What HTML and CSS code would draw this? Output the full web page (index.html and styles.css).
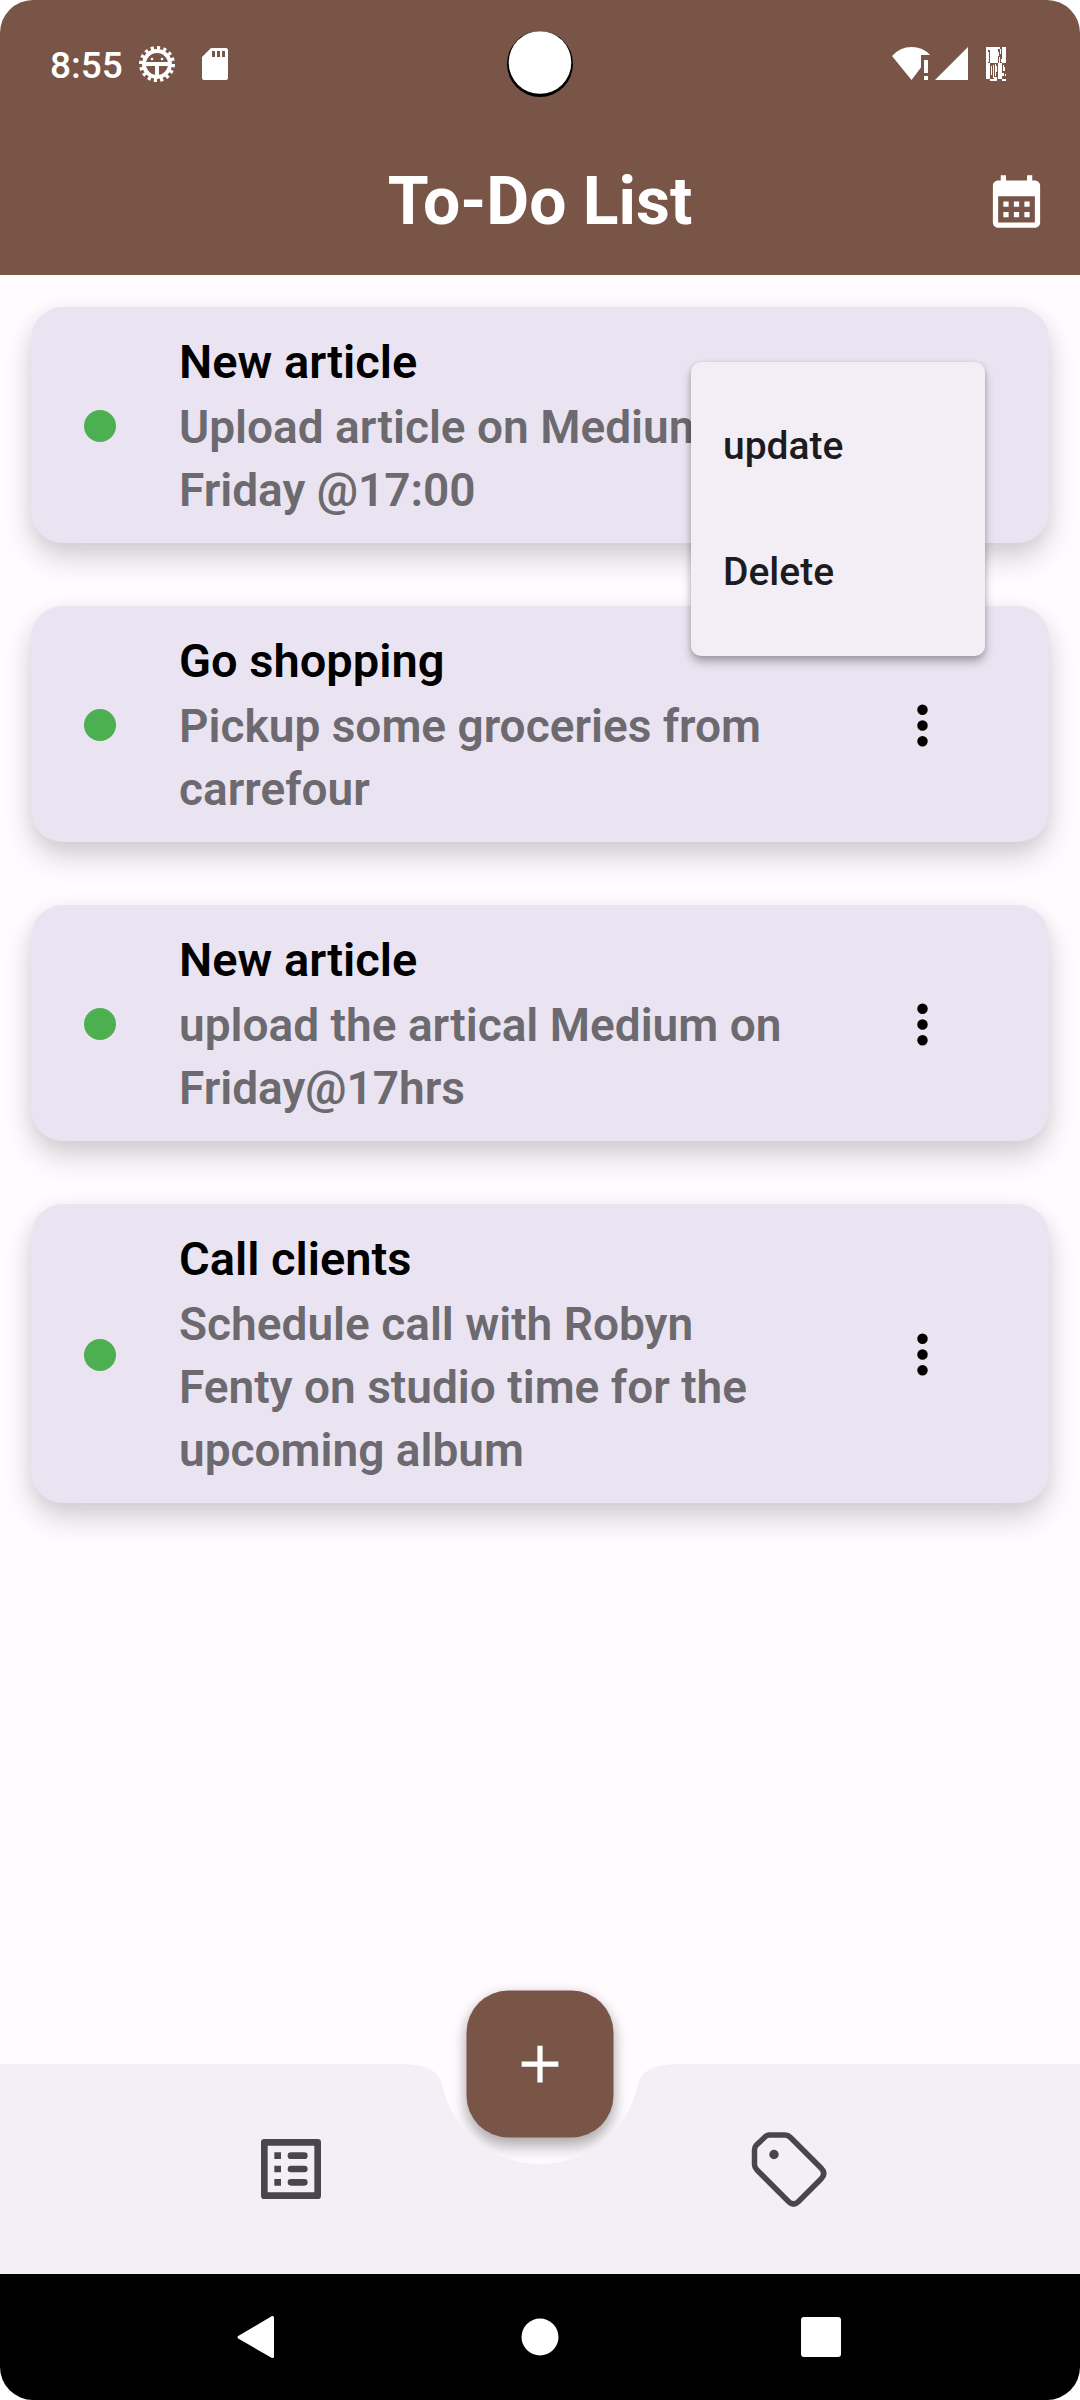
FILE: index.html
```html
<!DOCTYPE html>
<html lang="en">
<head>
  <meta charset="utf-8">
  <meta name="viewport" content="width=device-width, initial-scale=1">
  <title>To-Do List</title>
  <link rel="stylesheet" href="styles.css">
</head>
<body>
<div class="screen">
  <header class="header">
    <div class="status">
      <div class="status-group">
        <span class="clock">8:55</span>
        <svg class="gear" viewBox="0 0 36 36" aria-hidden="true">
          <circle cx="18" cy="18" r="13" fill="none" stroke="#fff" stroke-width="4"/>
          <circle cx="18" cy="18" r="16" fill="none" stroke="#fff" stroke-width="4" pathLength="32" stroke-dasharray="1 1"/>
          <path d="M6 16h24v4H6zM16 19h4v12h-4z" fill="#fff"/>
          <circle cx="13" cy="13" r="1.3" fill="#fff"/>
          <circle cx="23" cy="13" r="1.3" fill="#fff"/>
        </svg>
        <svg class="sd" viewBox="0 0 26 32" aria-hidden="true">
          <path fill="#fff" fill-rule="evenodd" d="M9 0h15a2 2 0 0 1 2 2v28a2 2 0 0 1-2 2H2a2 2 0 0 1-2-2V9zM10 3v6h3V3zm5 0v6h3V3zm5 0v6h3V3z"/>
        </svg>
      </div>
      <svg class="camera" viewBox="0 0 66 66" aria-hidden="true">
        <circle cx="33" cy="33" r="33"/>
        <circle cx="33" cy="31.500" r="31.300" fill="#fff"/>
      </svg>
      <div class="status-group status-right">
        <svg class="wifi" viewBox="0 0 40 34" aria-hidden="true">
          <path fill="#fff" d="M0 9Q8 0 19.500 0T38 8h-9v12.500L19.500 33zM32 13h4v13h-4zM32 29h4v4h-4z"/>
        </svg>
        <svg class="cell" viewBox="0 0 33 34" aria-hidden="true"><path fill="#fff" d="M33 0v33H0z"/></svg>
        <svg class="battery" viewBox="0 0 20 34" aria-hidden="true" shape-rendering="crispEdges">
          <path fill="#fff" d="M0 0h2v32H0zM2 0h2v3H2zM2 5h1v10H2zM4 2h8v14H4zM4 0h10v2H4zM12 5h1v4h-1zM13 10h1v6h-1zM14 2h1v5h-1zM16 0h4v16h-4zM15 12h1v3h-1zM2 16h2v16H2zM5 19h1v9H5zM7 18h1v13H7zM9 17h1v12H9zM10 19h1v6h-1zM12 16h4v16h-4zM17 18h1v6h-1zM18 20h1v4h-1zM16 26h2v3h-2zM19 27h1v2h-1zM4 32h7v2H4zM16 32h4v2h-4zM8 30h3v2H8z"/>
        </svg>
      </div>
    </div>
    <div class="appbar">
      <h1 class="title">To-Do List</h1>
      <button class="icon-button calendar" type="button" aria-label="Calendar">
        <svg viewBox="0 0 24 24" aria-hidden="true"><path fill="#fff" d="M19 4h-1V2h-2v2H8V2H6v2H5c-1.110 0-1.990.9-1.990 2L3 20c0 1.100.89 2 2 2h14c1.100 0 2-.9 2-2V6c0-1.100-.9-2-2-2zm0 16H5V10h14v10zM9 14H7v-2h2v2zm4 0h-2v-2h2v2zm4 0h-2v-2h2v2zm-8 4H7v-2h2v2zm4 0h-2v-2h2v2zm4 0h-2v-2h2v2z"/></svg>
      </button>
    </div>
  </header>

  <main class="tasks">
    <article class="card">
      <span class="dot"></span>
      <div class="card-text">
        <h2 class="card-title">New article</h2>
        <p class="card-desc">Upload article on Medium Friday @17:00</p>
      </div>
      <button class="icon-button more" type="button" aria-label="Options">
        <svg viewBox="0 0 24 24" aria-hidden="true"><path d="M12 8a2 2 0 1 0 0-4 2 2 0 0 0 0 4zm0 2a2 2 0 1 0 0 4 2 2 0 0 0 0-4zm0 6a2 2 0 1 0 0 4 2 2 0 0 0 0-4z"/></svg>
      </button>
      <div class="menu" role="menu">
        <button class="menu-item" type="button" role="menuitem">update</button>
        <button class="menu-item" type="button" role="menuitem">Delete</button>
      </div>
    </article>
    <article class="card">
      <span class="dot"></span>
      <div class="card-text">
        <h2 class="card-title">Go shopping</h2>
        <p class="card-desc">Pickup some groceries from carrefour</p>
      </div>
      <button class="icon-button more" type="button" aria-label="Options">
        <svg viewBox="0 0 24 24" aria-hidden="true"><path d="M12 8a2 2 0 1 0 0-4 2 2 0 0 0 0 4zm0 2a2 2 0 1 0 0 4 2 2 0 0 0 0-4zm0 6a2 2 0 1 0 0 4 2 2 0 0 0 0-4z"/></svg>
      </button>
    </article>
    <article class="card">
      <span class="dot"></span>
      <div class="card-text">
        <h2 class="card-title">New article</h2>
        <p class="card-desc">upload the artical Medium on Friday@17hrs</p>
      </div>
      <button class="icon-button more" type="button" aria-label="Options">
        <svg viewBox="0 0 24 24" aria-hidden="true"><path d="M12 8a2 2 0 1 0 0-4 2 2 0 0 0 0 4zm0 2a2 2 0 1 0 0 4 2 2 0 0 0 0-4zm0 6a2 2 0 1 0 0 4 2 2 0 0 0 0-4z"/></svg>
      </button>
    </article>
    <article class="card">
      <span class="dot"></span>
      <div class="card-text">
        <h2 class="card-title">Call clients</h2>
        <p class="card-desc">Schedule call with Robyn Fenty on studio time for the upcoming album</p>
      </div>
      <button class="icon-button more" type="button" aria-label="Options">
        <svg viewBox="0 0 24 24" aria-hidden="true"><path d="M12 8a2 2 0 1 0 0-4 2 2 0 0 0 0 4zm0 2a2 2 0 1 0 0 4 2 2 0 0 0 0-4zm0 6a2 2 0 1 0 0 4 2 2 0 0 0 0-4z"/></svg>
      </button>
    </article>
  </main>

  <nav class="tabs">
    <button class="fab" type="button" aria-label="Add task">
      <svg viewBox="0 0 24 24" aria-hidden="true"><path fill="#fff" d="M19 13h-6v6h-2v-6H5v-2h6V5h2v6h6z"/></svg>
    </button>
    <div class="tab-side tab-left">
      <button class="icon-button tab" type="button" aria-label="List">
        <svg viewBox="0 0 24 24" aria-hidden="true">
          <path fill="#49454f" fill-rule="evenodd" d="M4 3h16a1 1 0 0 1 1 1v16a1 1 0 0 1-1 1H4a1 1 0 0 1-1-1V4a1 1 0 0 1 1-1zM5 5v14h14V5zM7 7h2v2H7zM7 11h2v2H7zM7 15h2v2H7zM12 7h4a1 1 0 0 1 0 2h-4a1 1 0 0 1 0-2zM12 11h4a1 1 0 0 1 0 2h-4a1 1 0 0 1 0-2zM12 15h4a1 1 0 0 1 0 2h-4a1 1 0 0 1 0-2z"/>
        </svg>
      </button>
    </div>
    <svg class="notch" viewBox="0 0 280 210" aria-hidden="true">
      <path fill="#f2eff6" d="M0 0C25 0 38 6 42 20A100 100 0 0 0 238 20C242 6 255 0 280 0V210H0z"/>
    </svg>
    <div class="tab-side tab-right">
      <button class="icon-button tab" type="button" aria-label="Tags">
        <svg viewBox="2 0 80 80" aria-hidden="true">
          <path fill="none" stroke="#49454f" stroke-width="5.500" d="M22.500 6H38Q41 6 43.500 8.500L74 39Q79.500 44.500 74 50L51.500 72.500Q46.500 77.500 41.500 72.500L10 41Q7.500 38.500 7.500 35.500V21Q7.500 18 9.500 16L17.500 8.500Q19.500 6 22.500 6z"/>
          <circle cx="27" cy="25.500" r="4.700" fill="#49454f"/>
        </svg>
      </button>
    </div>
  </nav>

  <footer class="system">
    <button class="icon-button system-button" type="button" aria-label="Back">
      <svg viewBox="0 0 48 48" aria-hidden="true"><path fill="#fff" d="M39 4.500q0-2-2-1.500L4 22.500q-3 1.500 0 3.500L37 45q2 .5 2-1.500z"/></svg>
    </button>
    <button class="icon-button system-button" type="button" aria-label="Home">
      <svg viewBox="0 0 48 48" aria-hidden="true"><circle cx="24" cy="24" r="18.500" fill="#fff"/></svg>
    </button>
    <button class="icon-button system-button" type="button" aria-label="Recent apps">
      <svg viewBox="0 0 48 48" aria-hidden="true"><rect x="4" y="4" width="40" height="40" rx="3" fill="#fff"/></svg>
    </button>
  </footer>
</div>
</body>
</html>
```
FILE: styles.css
```css
* {
  box-sizing: border-box;
}

body {
  margin: 0;
  background: #fff;
  font-family: Roboto, "Liberation Sans", sans-serif;
}

button {
  margin: 0;
  padding: 0;
  border: 0;
  background: none;
  color: inherit;
  font: inherit;
  cursor: pointer;
}

svg {
  display: block;
}

h1,
h2,
p {
  margin: 0;
}

.screen {
  display: flex;
  flex-direction: column;
  min-height: 100vh;
  overflow: hidden;
  border-radius: 33px;
  background: #fffbff;
}

.header {
  background: #795548;
  color: #fff;
}

.status {
  display: grid;
  grid-template-columns: 1fr auto 1fr;
  align-items: center;
  height: 128px;
  padding: 0 74px 0 50px;
}

.status-group {
  display: flex;
  align-items: center;
}

.status-right {
  justify-content: flex-end;
}

.clock {
  padding-top: 4px;
  font-size: 37px;
  line-height: 44px;
  font-weight: 500;
}

.gear {
  width: 36px;
  height: 36px;
  margin-left: 16px;
}

.sd {
  width: 26px;
  height: 32px;
  margin-left: 27px;
}

.camera {
  width: 66px;
  height: 66px;
  margin-left: 24px;
}

.wifi {
  width: 40px;
  height: 34px;
}

.cell {
  width: 33px;
  height: 34px;
  margin-left: 3px;
}

.battery {
  width: 20px;
  height: 34px;
  margin-left: 18px;
}

.appbar {
  display: grid;
  grid-template-columns: 1fr auto 1fr;
  align-items: center;
  height: 147px;
  padding: 0 32px;
}

.title {
  grid-column: 2;
  font-size: 66px;
  line-height: 76px;
  font-weight: 700;
}

.icon-button {
  display: flex;
  align-items: center;
  justify-content: center;
}

.icon-button svg {
  width: 100%;
  height: 100%;
}

.calendar {
  justify-self: end;
  width: 63px;
  height: 63px;
}

.tasks {
  display: flex;
  flex: 1;
  flex-direction: column;
  gap: 63px;
  padding: 32px 31px 96px;
}

.card {
  position: relative;
  display: flex;
  align-items: center;
  padding: 23px 95px 21px 53px;
  border-radius: 32px;
  background: #eae4f2;
  box-shadow: 0 16px 30px rgba(0, 0, 0, 0.16), 0 4px 20px rgba(0, 0, 0, 0.06);
}

.dot {
  flex: none;
  width: 32px;
  height: 32px;
  border-radius: 50%;
  background: #4caf50;
}

.card-text {
  display: flex;
  flex: 1;
  flex-direction: column;
  gap: 3px;
  margin: 0 91px 0 63px;
  line-height: 63px;
}

.card-title {
  color: #000;
  font-size: 47px;
  font-weight: 600;
}

.card-desc {
  color: #6c6a6f;
  font-size: 46px;
  font-weight: 600;
}

.more {
  flex: none;
  width: 63px;
  height: 63px;
}

.menu {
  position: absolute;
  top: 55px;
  right: 64px;
  z-index: 2;
  width: 294px;
  padding: 21px 0;
  border-radius: 10px;
  background: #f3eef5;
  box-shadow: 0 6px 10px rgba(0, 0, 0, 0.28), 0 1px 5px rgba(0, 0, 0, 0.12);
}

.menu-item {
  display: block;
  width: 100%;
  height: 126px;
  padding: 0 32px;
  color: #1c1b1f;
  font-size: 39px;
  font-weight: 500;
  text-align: left;
}

.tabs {
  position: relative;
  z-index: 0;
  display: flex;
  height: 210px;
}

.tab-side {
  display: flex;
  flex: 1;
  align-items: center;
  padding: 0 69px;
  background: #f2eff6;
}

.tab-left {
  justify-content: flex-end;
}

.notch {
  flex: none;
  width: 280px;
  height: 210px;
  pointer-events: none;
}

.tab {
  width: 80px;
  height: 80px;
}

.fab {
  position: absolute;
  top: 0;
  left: 50%;
  z-index: -1;
  display: flex;
  align-items: center;
  justify-content: center;
  width: 147px;
  height: 147px;
  border-radius: 42px;
  background: #795548;
  box-shadow: 0 10px 16px rgba(0, 0, 0, 0.25), 0 2px 12px rgba(0, 0, 0, 0.12);
  transform: translate(-50%, -50%);
}

.fab svg {
  width: 63px;
  height: 63px;
}

.system {
  display: flex;
  align-items: center;
  justify-content: space-between;
  height: 126px;
  padding: 0 235px;
  background: #000;
}

.system-button {
  width: 48px;
  height: 48px;
}
```
